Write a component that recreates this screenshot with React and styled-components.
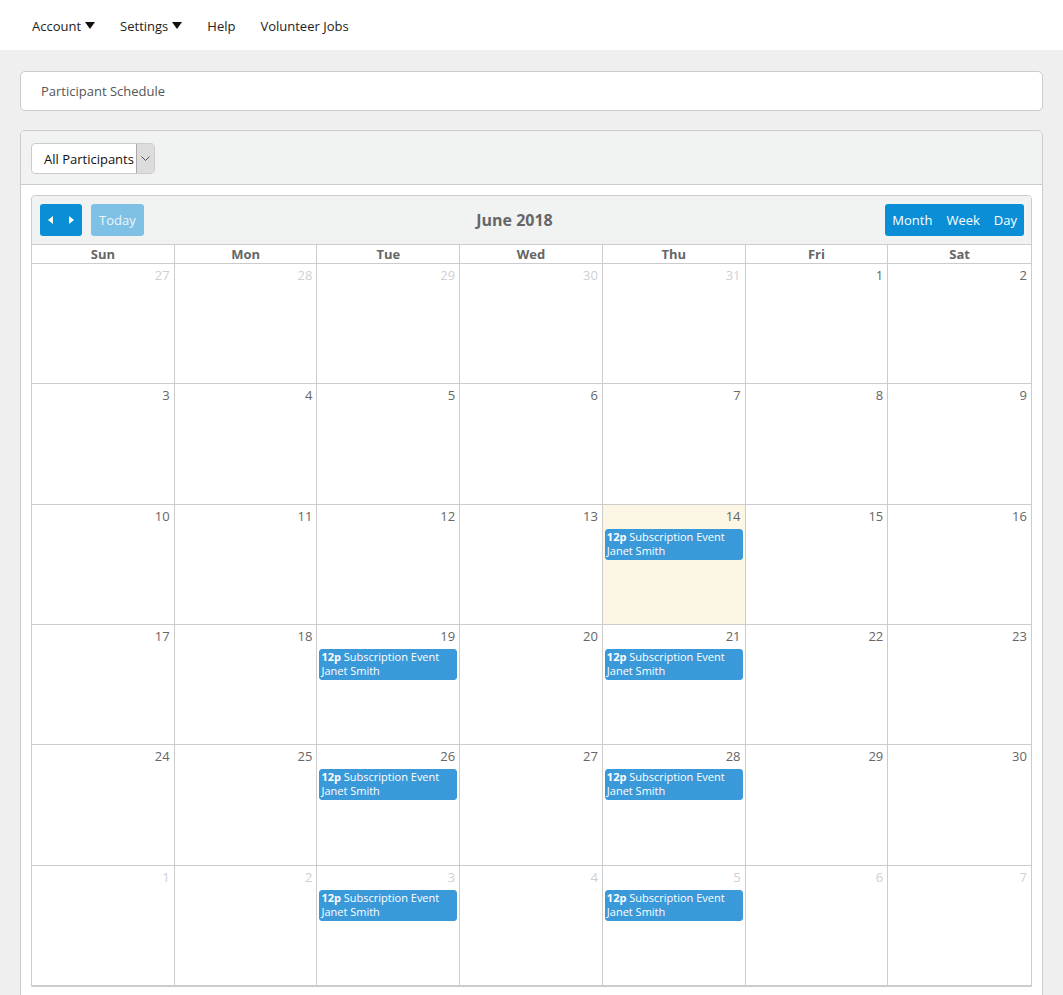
import React from 'react';
import styled, { createGlobalStyle } from 'styled-components';

const GlobalStyle = createGlobalStyle`
  html, body {
    margin: 0;
    padding: 0;
    background: #efefef;
    font-family: 'Open Sans', 'Liberation Sans', sans-serif;
    font-size: 13px;
    color: #333;
  }
  * { box-sizing: border-box; }
`;

const TopNav = styled.nav`
  height: 50px;
  background: #fff;
  display: flex;
  align-items: center;
  padding-left: 32px;
  gap: 25px;
`;

const NavItem = styled.a`
  display: flex;
  align-items: center;
  gap: 4px;
  color: #222;
  font-size: 13px;
  text-decoration: none;
  padding-top: 2px;
`;

const Caret = () => (
  <svg width="10" height="8" viewBox="0 0 10 8">
    <path d="M0 0 H10 L5 7 Z" fill="#111" />
  </svg>
);

const Main = styled.div`
  padding: 21px 20px 0 20px;
`;

const TitleCard = styled.div`
  background: #fff;
  border: 1px solid #ccc;
  border-radius: 5px;
  height: 40px;
  display: flex;
  align-items: center;
  padding-left: 20px;
  color: #555;
  margin-bottom: 19px;
`;

const Panel = styled.div`
  background: #fff;
  border: 1px solid #ccc;
  border-radius: 5px;
  overflow: hidden;
`;

const PanelHeader = styled.div`
  background: #f1f2f2;
  border-bottom: 1px solid #ccc;
  padding: 12px 10px 10px;
`;

const Select = styled.div`
  display: inline-flex;
  align-items: stretch;
  height: 31px;
  width: 124px;
  background: #fff;
  border: 1px solid #ccc;
  border-radius: 4px;
  overflow: hidden;
`;

const SelectLabel = styled.span`
  flex: 1;
  display: flex;
  align-items: center;
  padding-left: 12px;
  color: #111;
  font-size: 13px;
  white-space: nowrap;
`;

const SelectArrow = styled.span`
  width: 18px;
  background: #dcdcdc;
  border-left: 1px solid #aaa;
  display: flex;
  align-items: center;
  justify-content: center;
`;

const PanelBody = styled.div`
  padding: 10px 10px 20px;
`;

const Calendar = styled.div`
  border: 1px solid #ccc;
  border-radius: 4px 4px 0 0;
`;

const Toolbar = styled.div`
  background: #f1f2f2;
  display: flex;
  align-items: center;
  padding: 8px 7px 8px 8px;
  border-radius: 4px 4px 0 0;
`;

const ToolGroup = styled.div`
  display: flex;
  gap: 9px;
`;

const BlueButton = styled.button`
  height: 32px;
  border: none;
  border-radius: 3px;
  background: ${p => (p.$faded ? '#7fc1e4' : '#0a8fd6')};
  color: ${p => (p.$faded ? '#eaf5fb' : '#fff')};
  font-family: inherit;
  font-size: 13px;
  padding: ${p => p.$pad || '0 8px'};
  display: flex;
  align-items: center;
  gap: ${p => p.$gap || '0'};
`;

const ViewLink = styled.span`
  padding: 0 7px;
`;

const Title = styled.h2`
  flex: 1;
  margin: 0;
  text-align: center;
  font-size: 16px;
  font-weight: 700;
  color: #666;
`;

const Grid = styled.div`
  display: grid;
  grid-template-columns: repeat(7, 1fr);
  border-top: 1px solid #ccc;
`;

const HeadCell = styled.div`
  height: 19px;
  text-align: center;
  font-weight: 700;
  color: #666;
  font-size: 13px;
  line-height: 18px;
  border-right: 1px solid #ccc;
  border-bottom: 1px solid #ccc;
  &:nth-child(7n) { border-right: none; }
`;

const DayCell = styled.div`
  height: 120.33px;
  background: ${p => (p.$today ? '#fcf7e4' : '#fff')};
  border-right: 1px solid #ccc;
  border-bottom: 1px solid #ccc;
  &:nth-child(7n) { border-right: none; }
  padding: 2px 2px 0 2px;
`;

const DayNum = styled.div`
  text-align: right;
  padding-right: 2px;
  height: 22px;
  color: ${p => (p.$other ? '#cfcfd4' : '#666')};
  font-size: 13px;
  line-height: 18px;
`;

const Event = styled.div`
  background: #3a99d9;
  border: 1px solid #3a99d9;
  border-radius: 3px;
  color: #fff;
  font-size: 11px;
  line-height: 14px;
  padding: 0 1px;
  height: 31px;
  b { font-weight: 700; }
`;

const Arrow = ({ dir }) => (
  <svg width="5" height="8" viewBox="0 0 5 8">
    <path d={dir === 'left' ? 'M5 0 V8 L0 4 Z' : 'M0 0 V8 L5 4 Z'} fill="#fff" />
  </svg>
);

const eventDays = ['2018-06-14', '2018-06-19', '2018-06-21', '2018-06-26', '2018-06-28', '2018-07-03', '2018-07-05'];

const buildDays = () => {
  const days = [];
  const start = new Date(2018, 4, 27);
  for (let i = 0; i < 42; i++) {
    const d = new Date(start);
    d.setDate(start.getDate() + i);
    const key = `${d.getFullYear()}-${String(d.getMonth() + 1).padStart(2, '0')}-${String(d.getDate()).padStart(2, '0')}`;
    days.push({
      key,
      num: d.getDate(),
      other: d.getMonth() !== 5,
      today: key === '2018-06-14',
      event: eventDays.includes(key),
    });
  }
  return days;
};

const App = () => {
  const days = buildDays();
  return (
    <>
      <GlobalStyle />
      <TopNav>
        <NavItem>Account <Caret /></NavItem>
        <NavItem>Settings <Caret /></NavItem>
        <NavItem>Help</NavItem>
        <NavItem>Volunteer Jobs</NavItem>
      </TopNav>
      <Main>
        <TitleCard>Participant Schedule</TitleCard>
        <Panel>
          <PanelHeader>
            <Select>
              <SelectLabel>All Participants</SelectLabel>
              <SelectArrow>
                <svg width="9" height="6" viewBox="0 0 9 6">
                  <path d="M0.5 0.5 L4.5 4.5 L8.5 0.5" stroke="#555" fill="none" strokeWidth="1" />
                </svg>
              </SelectArrow>
            </Select>
          </PanelHeader>
          <PanelBody>
            <Calendar>
              <Toolbar>
                <ToolGroup>
                  <BlueButton $pad="0 8px" $gap="16px"><Arrow dir="left" /><Arrow dir="right" /></BlueButton>
                  <BlueButton $faded>Today</BlueButton>
                </ToolGroup>
                <Title>June 2018</Title>
                <BlueButton $pad="0">
                  <ViewLink>Month</ViewLink>
                  <ViewLink>Week</ViewLink>
                  <ViewLink>Day</ViewLink>
                </BlueButton>
              </Toolbar>
              <Grid>
                {['Sun', 'Mon', 'Tue', 'Wed', 'Thu', 'Fri', 'Sat'].map(n => (
                  <HeadCell key={n}>{n}</HeadCell>
                ))}
                {days.map(d => (
                  <DayCell key={d.key} $today={d.today}>
                    <DayNum $other={d.other}>{d.num}</DayNum>
                    {d.event && (
                      <Event>
                        <b>12p</b> Subscription Event<br />Janet Smith
                      </Event>
                    )}
                  </DayCell>
                ))}
              </Grid>
            </Calendar>
          </PanelBody>
        </Panel>
      </Main>
    </>
  );
};

export default App;
